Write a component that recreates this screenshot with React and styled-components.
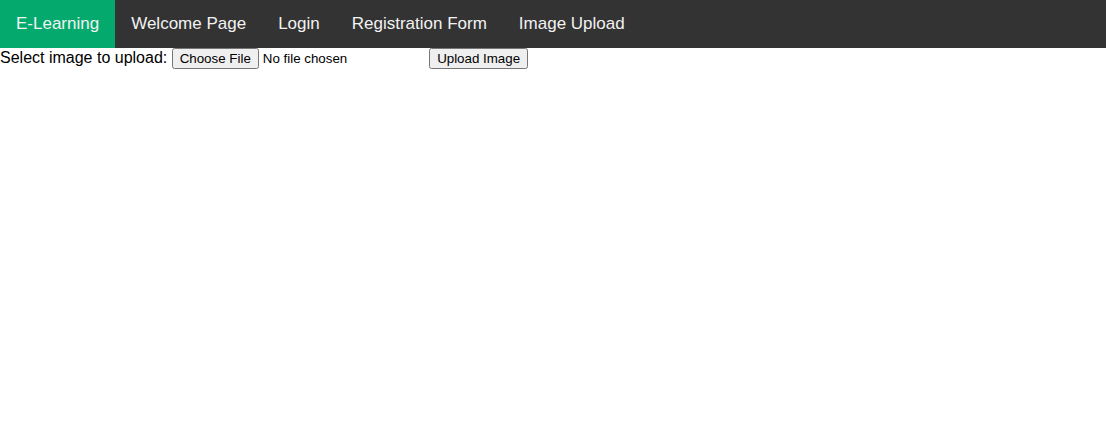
import styled, { createGlobalStyle } from 'styled-components';

const GlobalStyle = createGlobalStyle`
  body {
    margin: 0;
    font-family: "Liberation Sans", Arial, Helvetica, sans-serif;
    background: #fff;
  }
`

const TopNav = styled.div`
  overflow: hidden;
  background-color: #333;
`

const NavLink = styled.a`
  float: left;
  color: #f2f2f2;
  text-align: center;
  padding: 14px 16px;
  text-decoration: none;
  font-size: 17px;
  background-color: ${props => (props.$active ? '#04AA6D' : 'transparent')};
`

const Form = styled.form`
  font-size: 16px;
  color: #000;
`

const FileInput = styled.input`
  font-family: "Liberation Sans", Arial, sans-serif;
  font-size: 13.33px;
`

const Submit = styled.input`
  font-family: "Liberation Sans", Arial, sans-serif;
  font-size: 13.33px;
`

const links = ['Welcome Page', 'Login', 'Registration Form', 'Image Upload']

const App = () => {
  return (
    <>
      <GlobalStyle />
      <TopNav>
        <NavLink $active href="#">E-Learning</NavLink>
        {links.map(l => (
          <NavLink key={l} href="#">{l}</NavLink>
        ))}
      </TopNav>
      <Form onSubmit={e => e.preventDefault()}>
        Select image to upload: <FileInput type="file" name="fileToUpload" />{' '}
        <Submit type="submit" value="Upload Image" name="submit" />
      </Form>
    </>
  )
}

export default App
